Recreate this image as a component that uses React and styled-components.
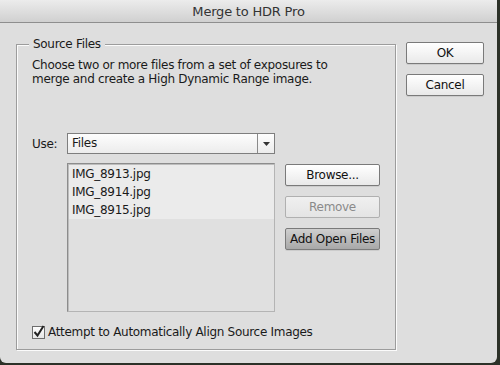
import React from "react";
import styled, { createGlobalStyle } from "styled-components";

const GlobalStyle = createGlobalStyle`
  html, body {
    margin: 0;
    padding: 0;
    background: #2c3128;
  }
  body {
    font-family: "DejaVu Sans", "Liberation Sans", sans-serif;
    font-size: 12px;
    letter-spacing: -0.3px;
    color: #1a1a1a;
  }
`;

const files = ["IMG_8913.jpg", "IMG_8914.jpg", "IMG_8915.jpg"];

const App = () => {
  return (
    <>
      <GlobalStyle />
      <Window>
        <TitleBar>Merge to HDR Pro</TitleBar>
        <Body>
          <GroupBox>
            <Legend>Source Files</Legend>
            <Description>
              Choose two or more files from a set of exposures to
              <br />
              merge and create a High Dynamic Range image.
            </Description>
            <UseRow>
              <UseLabel>Use:</UseLabel>
              <Select>
                <SelectValue>Files</SelectValue>
                <SelectArrow>
                  <svg width="7" height="4" viewBox="0 0 7 4">
                    <path d="M0 0h7L3.5 4z" fill="#333" />
                  </svg>
                </SelectArrow>
              </Select>
            </UseRow>
            <FilesRow>
              <FileList>
                {files.map((f) => (
                  <FileItem key={f}>{f}</FileItem>
                ))}
              </FileList>
              <ButtonColumn>
                <Button>Browse...</Button>
                <Button disabled>Remove</Button>
                <Button $pressed>Add Open Files</Button>
              </ButtonColumn>
            </FilesRow>
            <CheckRow>
              <CheckBox>
                <svg width="13" height="13" viewBox="0 0 13 13">
                  <path
                    d="M2.5 7l3 3.5L11.5 1"
                    fill="none"
                    stroke="#222"
                    strokeWidth="2"
                  />
                </svg>
              </CheckBox>
              Attempt to Automatically Align Source Images
            </CheckRow>
          </GroupBox>
          <SideButtons>
            <Button $wide>OK</Button>
            <Button $wide>Cancel</Button>
          </SideButtons>
        </Body>
      </Window>
    </>
  );
};

const Window = styled.div`
  width: 497px;
  height: 363px;
  background: #dedede;
  border-radius: 0 0 6px 6px;
  display: flex;
  flex-direction: column;
  overflow: hidden;
`;

const TitleBar = styled.div`
  height: 23px;
  flex: none;
  box-sizing: border-box;
  border-bottom: 1px solid #8e8e8e;
  background: linear-gradient(#ececec, #d0d0d0);
  display: flex;
  align-items: center;
  justify-content: center;
  padding-top: 1px;
  font-size: 13px;
  letter-spacing: -0.2px;
  color: #333;
`;

const Body = styled.div`
  display: flex;
  align-items: flex-start;
  padding: 21px 0 0 16px;
`;

const GroupBox = styled.div`
  position: relative;
  width: 380px;
  height: 306px;
  box-sizing: border-box;
  border: 1px solid #9c9c9c;
  box-shadow: 1px 1px 0 #fbfbfb, inset 1px 1px 0 #fbfbfb;
  padding: 13px 15px 0 15px;
  display: flex;
  flex-direction: column;
`;

const Legend = styled.span`
  position: absolute;
  top: -8px;
  left: 12px;
  padding: 0 4px;
  background: #dedede;
  line-height: 15px;
`;

const Description = styled.p`
  margin: 0;
  line-height: 14px;
`;

const UseRow = styled.div`
  display: flex;
  align-items: center;
  margin-top: 47px;
`;

const UseLabel = styled.span`
  width: 35px;
`;

const Select = styled.div`
  width: 208px;
  height: 21px;
  box-sizing: border-box;
  border: 1px solid #7e7e7e;
  background: linear-gradient(#fdfdfd, #ececec);
  display: flex;
`;

const SelectValue = styled.span`
  flex: 1;
  padding-left: 4px;
  line-height: 19px;
`;

const SelectArrow = styled.span`
  width: 16px;
  border-left: 1px solid #8a8a8a;
  display: flex;
  align-items: center;
  justify-content: center;
`;

const FilesRow = styled.div`
  display: flex;
  align-items: flex-start;
  margin-top: 9px;
  margin-left: 35px;
  gap: 10px;
`;

const FileList = styled.div`
  width: 208px;
  height: 149px;
  box-sizing: border-box;
  border: 1px solid #8c8c8c;
  border-right-color: #b4b4b4;
  border-bottom-color: #b4b4b4;
  box-shadow: inset 1px 1px 0 #bdbdbd;
  background: #e0e0e0;
  padding-top: 1px;
`;

const FileItem = styled.div`
  height: 18px;
  line-height: 18px;
  padding-left: 3px;
  margin-left: 1px;
  background: #ebebeb;
`;

const ButtonColumn = styled.div`
  display: flex;
  flex-direction: column;
  gap: 10px;
  margin-top: 1px;
`;

const Button = styled.button`
  width: ${(p) => (p.$wide ? "78px" : "95px")};
  height: 22px;
  padding: 0;
  font-family: inherit;
  font-size: 12px;
  letter-spacing: -0.3px;
  color: #111;
  border: 1px solid #7a7a7a;
  border-radius: 2px;
  background: ${(p) =>
    p.$pressed
      ? "linear-gradient(#cfcfcf, #a8a8a8)"
      : "linear-gradient(#ffffff, #e9e9e9)"};
  box-shadow: 0 1px 0 rgba(0, 0, 0, 0.08);

  &:disabled {
    color: #8a8a8a;
    border-color: #b0b0b0;
    background: linear-gradient(#f0f0f0, #e4e4e4);
    box-shadow: none;
  }
`;

const SideButtons = styled.div`
  display: flex;
  flex-direction: column;
  gap: 10px;
  margin: -2px 0 0 10px;
`;

const CheckRow = styled.label`
  display: flex;
  align-items: center;
  margin-top: 13px;
  height: 14px;
`;

const CheckBox = styled.span`
  width: 13px;
  height: 13px;
  box-sizing: border-box;
  border: 1px solid #6e6e6e;
  background: linear-gradient(#fefefe, #e6e6e6);
  margin-right: 3px;
  display: flex;
  align-items: center;
  justify-content: center;
  overflow: visible;
  svg {
    flex: none;
    margin-top: -2px;
  }
`;

export default App;
